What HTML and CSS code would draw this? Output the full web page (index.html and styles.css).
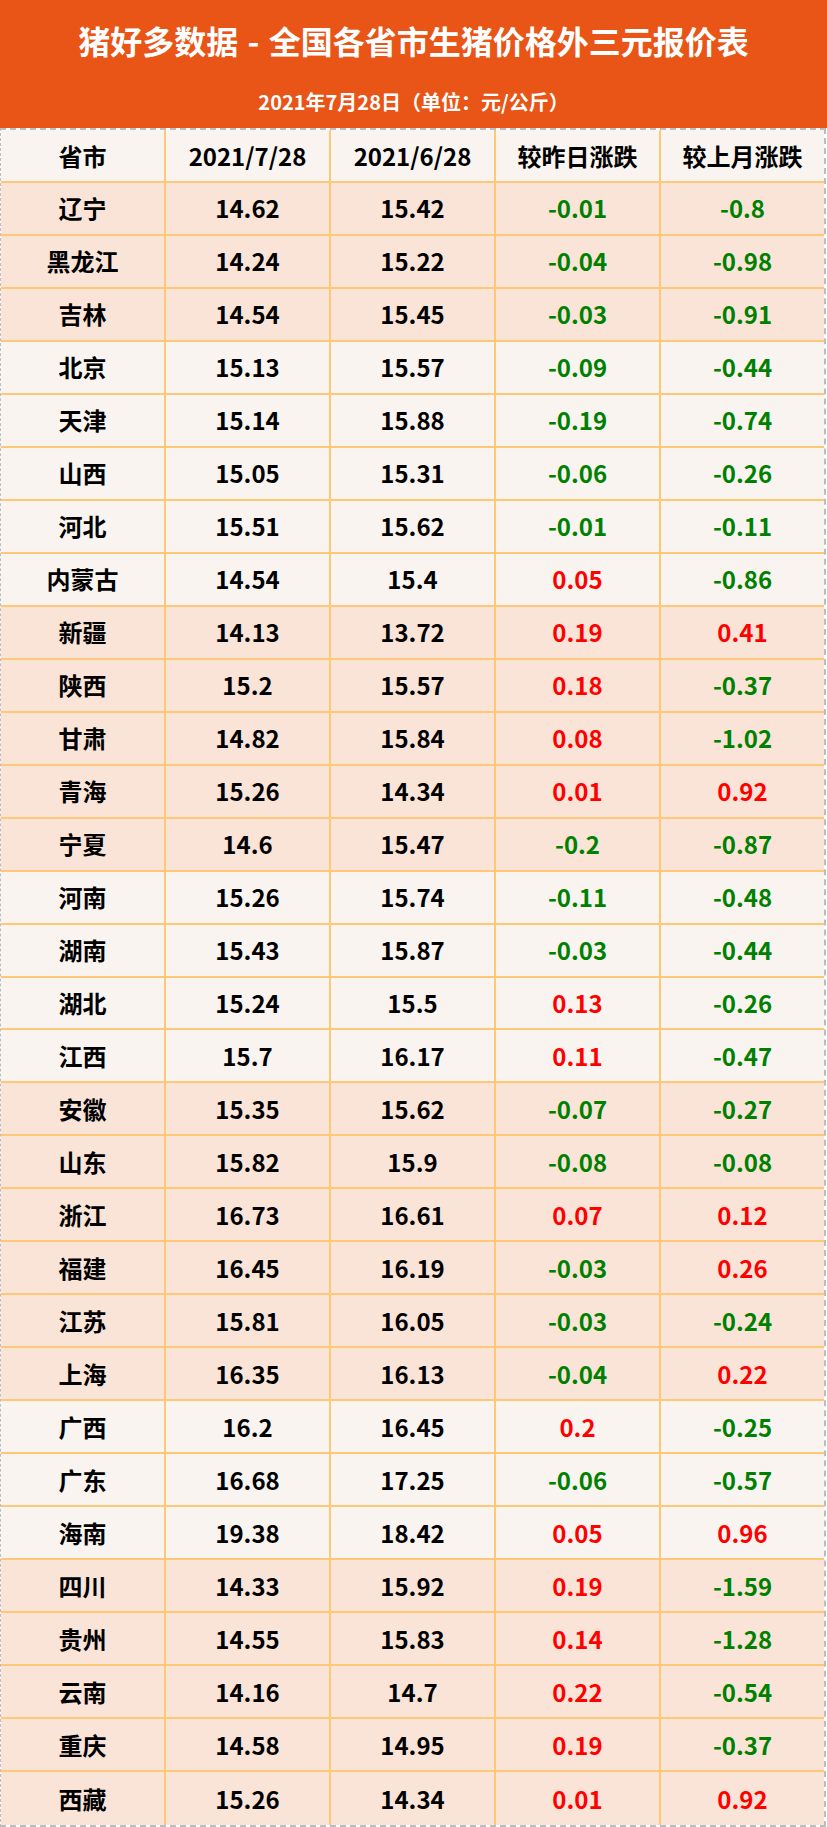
FILE: index.html
```html
<!DOCTYPE html>
<html lang="zh-CN">
<head>
<meta charset="utf-8">
<title>猪好多数据 - 全国各省市生猪价格外三元报价表</title>
<link rel="stylesheet" href="styles.css">
</head>
<body>
<div class="sheet">
  <header class="banner">
    <h1 class="title">猪好多数据 - 全国各省市生猪价格外三元报价表</h1>
    <p class="subtitle">2021年7月28日（单位：元/公斤）</p>
  </header>
  <div class="table">
    <div class="row head"><div class="cell">省市</div><div class="cell">2021/7/28</div><div class="cell">2021/6/28</div><div class="cell">较昨日涨跌</div><div class="cell">较上月涨跌</div></div>
    <div class="row peach"><div class="cell">辽宁</div><div class="cell">14.62</div><div class="cell">15.42</div><div class="cell down">-0.01</div><div class="cell down">-0.8</div></div>
    <div class="row peach"><div class="cell">黑龙江</div><div class="cell">14.24</div><div class="cell">15.22</div><div class="cell down">-0.04</div><div class="cell down">-0.98</div></div>
    <div class="row peach"><div class="cell">吉林</div><div class="cell">14.54</div><div class="cell">15.45</div><div class="cell down">-0.03</div><div class="cell down">-0.91</div></div>
    <div class="row light"><div class="cell">北京</div><div class="cell">15.13</div><div class="cell">15.57</div><div class="cell down">-0.09</div><div class="cell down">-0.44</div></div>
    <div class="row light"><div class="cell">天津</div><div class="cell">15.14</div><div class="cell">15.88</div><div class="cell down">-0.19</div><div class="cell down">-0.74</div></div>
    <div class="row light"><div class="cell">山西</div><div class="cell">15.05</div><div class="cell">15.31</div><div class="cell down">-0.06</div><div class="cell down">-0.26</div></div>
    <div class="row light"><div class="cell">河北</div><div class="cell">15.51</div><div class="cell">15.62</div><div class="cell down">-0.01</div><div class="cell down">-0.11</div></div>
    <div class="row light"><div class="cell">内蒙古</div><div class="cell">14.54</div><div class="cell">15.4</div><div class="cell up">0.05</div><div class="cell down">-0.86</div></div>
    <div class="row peach"><div class="cell">新疆</div><div class="cell">14.13</div><div class="cell">13.72</div><div class="cell up">0.19</div><div class="cell up">0.41</div></div>
    <div class="row peach"><div class="cell">陕西</div><div class="cell">15.2</div><div class="cell">15.57</div><div class="cell up">0.18</div><div class="cell down">-0.37</div></div>
    <div class="row peach"><div class="cell">甘肃</div><div class="cell">14.82</div><div class="cell">15.84</div><div class="cell up">0.08</div><div class="cell down">-1.02</div></div>
    <div class="row peach"><div class="cell">青海</div><div class="cell">15.26</div><div class="cell">14.34</div><div class="cell up">0.01</div><div class="cell up">0.92</div></div>
    <div class="row peach"><div class="cell">宁夏</div><div class="cell">14.6</div><div class="cell">15.47</div><div class="cell down">-0.2</div><div class="cell down">-0.87</div></div>
    <div class="row light"><div class="cell">河南</div><div class="cell">15.26</div><div class="cell">15.74</div><div class="cell down">-0.11</div><div class="cell down">-0.48</div></div>
    <div class="row light"><div class="cell">湖南</div><div class="cell">15.43</div><div class="cell">15.87</div><div class="cell down">-0.03</div><div class="cell down">-0.44</div></div>
    <div class="row light"><div class="cell">湖北</div><div class="cell">15.24</div><div class="cell">15.5</div><div class="cell up">0.13</div><div class="cell down">-0.26</div></div>
    <div class="row light"><div class="cell">江西</div><div class="cell">15.7</div><div class="cell">16.17</div><div class="cell up">0.11</div><div class="cell down">-0.47</div></div>
    <div class="row peach"><div class="cell">安徽</div><div class="cell">15.35</div><div class="cell">15.62</div><div class="cell down">-0.07</div><div class="cell down">-0.27</div></div>
    <div class="row peach"><div class="cell">山东</div><div class="cell">15.82</div><div class="cell">15.9</div><div class="cell down">-0.08</div><div class="cell down">-0.08</div></div>
    <div class="row peach"><div class="cell">浙江</div><div class="cell">16.73</div><div class="cell">16.61</div><div class="cell up">0.07</div><div class="cell up">0.12</div></div>
    <div class="row peach"><div class="cell">福建</div><div class="cell">16.45</div><div class="cell">16.19</div><div class="cell down">-0.03</div><div class="cell up">0.26</div></div>
    <div class="row peach"><div class="cell">江苏</div><div class="cell">15.81</div><div class="cell">16.05</div><div class="cell down">-0.03</div><div class="cell down">-0.24</div></div>
    <div class="row peach"><div class="cell">上海</div><div class="cell">16.35</div><div class="cell">16.13</div><div class="cell down">-0.04</div><div class="cell up">0.22</div></div>
    <div class="row light"><div class="cell">广西</div><div class="cell">16.2</div><div class="cell">16.45</div><div class="cell up">0.2</div><div class="cell down">-0.25</div></div>
    <div class="row light"><div class="cell">广东</div><div class="cell">16.68</div><div class="cell">17.25</div><div class="cell down">-0.06</div><div class="cell down">-0.57</div></div>
    <div class="row light"><div class="cell">海南</div><div class="cell">19.38</div><div class="cell">18.42</div><div class="cell up">0.05</div><div class="cell up">0.96</div></div>
    <div class="row peach"><div class="cell">四川</div><div class="cell">14.33</div><div class="cell">15.92</div><div class="cell up">0.19</div><div class="cell down">-1.59</div></div>
    <div class="row peach"><div class="cell">贵州</div><div class="cell">14.55</div><div class="cell">15.83</div><div class="cell up">0.14</div><div class="cell down">-1.28</div></div>
    <div class="row peach"><div class="cell">云南</div><div class="cell">14.16</div><div class="cell">14.7</div><div class="cell up">0.22</div><div class="cell down">-0.54</div></div>
    <div class="row peach"><div class="cell">重庆</div><div class="cell">14.58</div><div class="cell">14.95</div><div class="cell up">0.19</div><div class="cell down">-0.37</div></div>
    <div class="row peach"><div class="cell">西藏</div><div class="cell">15.26</div><div class="cell">14.34</div><div class="cell up">0.01</div><div class="cell up">0.92</div></div>
  </div>
</div>
</body>
</html>
```
FILE: styles.css
```css
* { box-sizing: border-box; }
html, body { margin: 0; padding: 0; background: #ffffff; }
body {
  width: 827px;
  font-family: "Noto Sans CJK SC", "Noto Sans", sans-serif;
  font-weight: 700;
  color: #000;
}
.sheet { width: 827px; }
.banner {
  height: 128px;
  background: #e85517;
  color: #fff;
  display: flex;
  flex-direction: column;
  align-items: center;
  padding-top: 20px;
}
.title {
  margin: 0;
  font-size: 32px;
  line-height: 40px;
  font-weight: 700;
  word-spacing: 2px;
}
.subtitle {
  margin: 28px 0 0;
  font-size: 20px;
  line-height: 28px;
  font-weight: 700;
}
.table {
  width: 826px;
  height: 1699px;
  display: grid;
  grid-template-rows: 53px repeat(31, 1fr);
  border-top: 2px dashed #bdbdbd;
  border-left: 1px dashed #bdbdbd;
  border-right: 2px dashed #bdbdbd;
  border-bottom: 2px dashed #bdbdbd;
}
.row {
  display: grid;
  grid-template-columns: 165px 165px 165px 165px 1fr;
  border-bottom: 2px solid #fec877;
}
.row:last-child { border-bottom: none; }
.head, .light { background: #f9f4f0; }
.peach { background: #fae4d8; }
.cell {
  display: flex;
  align-items: center;
  justify-content: center;
  font-size: 24px;
  line-height: 1;
  border-right: 2px solid #fec877;
}
.cell:last-child { border-right: none; }
.up { color: #ff0000; }
.down { color: #008000; }
```
